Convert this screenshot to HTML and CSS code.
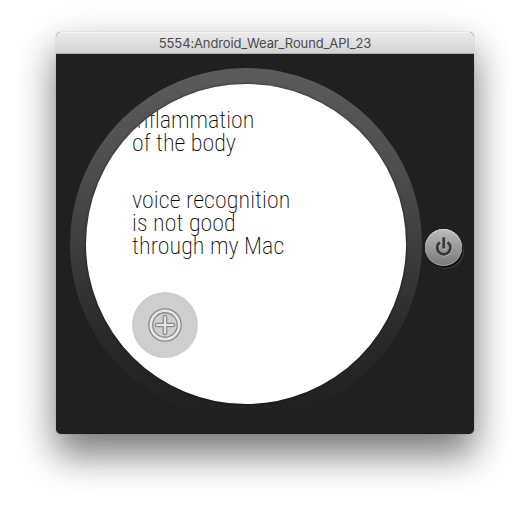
FILE: index.html
```html
<!DOCTYPE html>
<html lang="en">
<head>
<meta charset="utf-8">
<title>5554:Android_Wear_Round_API_23</title>
<link rel="stylesheet" href="styles.css">
</head>
<body>
<main class="window">
  <header class="titlebar"><span class="title">5554:Android_Wear_Round_API_23</span></header>
  <section class="device">
    <div class="bezel">
      <div class="screen">
        <p class="note">inflammation<br>of the body</p>
        <p class="note spaced">voice recognition<br>is not good<br>through my Mac</p>
        <button class="add" aria-label="Add">
          <svg width="36" height="36" viewBox="0 0 36 36" fill="none">
            <circle cx="18" cy="18" r="14.2" stroke="#8a8a8a" stroke-width="5.2"/>
            <circle cx="18" cy="18" r="14.2" stroke="#e4e4e4" stroke-width="2.6"/>
            <path d="M18 10v16M10 18h16" stroke="#8a8a8a" stroke-width="4.6" stroke-linecap="round"/>
            <path d="M18 10v16M10 18h16" stroke="#e4e4e4" stroke-width="2.2" stroke-linecap="round"/>
          </svg>
        </button>
      </div>
    </div>
    <button class="power" aria-label="Power">
      <svg width="22" height="22" viewBox="0 0 22 22" fill="none" stroke-width="2.8">
        <path d="M7.2 5.3a6.6 6.6 0 1 0 7.6 0M11 .2v11.4" stroke="#bdbdbd" transform="translate(.3 .8)"/>
        <path d="M7.2 5.3a6.6 6.6 0 1 0 7.6 0M11 .2v11.4" stroke="#383838" transform="translate(-.2 0)"/>
      </svg>
    </button>
  </section>
</main>
</body>
</html>
```
FILE: styles.css
```css
* { box-sizing: border-box; }
body {
  margin: 0;
  height: 514px;
  padding: 32px 56px 80px;
  overflow: hidden;
  background: #fff;
}
.window {
  width: 418px;
  height: 402px;
  border-radius: 5px;
  background: #202020;
  box-shadow: 0 0 1px rgba(0, 0, 0, .4), 0 22px 36px rgba(0, 0, 0, .46), 0 8px 44px rgba(0, 0, 0, .12);
}
.titlebar {
  height: 22px;
  display: flex;
  justify-content: center;
  border-radius: 5px 5px 0 0;
  border-top: 1px solid #f3f3f3;
  border-bottom: 1px solid #b0b2b0;
  background: linear-gradient(#eaeaea, #d3d3d3);
}
.title {
  font: 13px/21px Inter, "Liberation Sans", sans-serif;
  letter-spacing: -.13px;
  color: #4c4c4c;
  white-space: nowrap;
}
.device {
  height: 380px;
  display: flex;
  align-items: flex-start;
  padding: 14px 0 0 14px;
}
.bezel {
  flex: none;
  width: 352px;
  height: 352px;
  padding: 16px;
  border-radius: 50%;
  background: linear-gradient(#5b5b5b, #505050 25%, #3e3e3e 50%, #292929 77%, #202020);
}
.screen {
  width: 320px;
  height: 320px;
  padding: 25px 0 0 46px;
  border-radius: 50%;
  overflow: hidden;
  background: #fff;
  box-shadow: 0 0 3px rgba(0, 0, 0, .6);
}
.note {
  margin: 0 0 34px;
  font: 250 24px/23px "Roboto Condensed", Roboto, sans-serif;
  font-stretch: 75%;
  color: #000;
  white-space: nowrap;
}
.spaced { letter-spacing: .07px; }
.add {
  display: flex;
  align-items: center;
  justify-content: center;
  width: 66px;
  height: 66px;
  padding: 0;
  border: 0;
  border-radius: 50%;
  background: #cecece;
}
.power {
  flex: none;
  display: flex;
  align-items: center;
  justify-content: center;
  width: 37px;
  height: 37px;
  margin: 161px 0 0 3px;
  padding: 0;
  border: 0;
  border-radius: 50%;
  background: linear-gradient(#bcbcbc, #777);
  box-shadow: inset 0 1px 1px #d8d8d8, inset 0 -1px 1px #999, 1px 2px 0 #101010, 2px 3px 0 #393939;
}
```
